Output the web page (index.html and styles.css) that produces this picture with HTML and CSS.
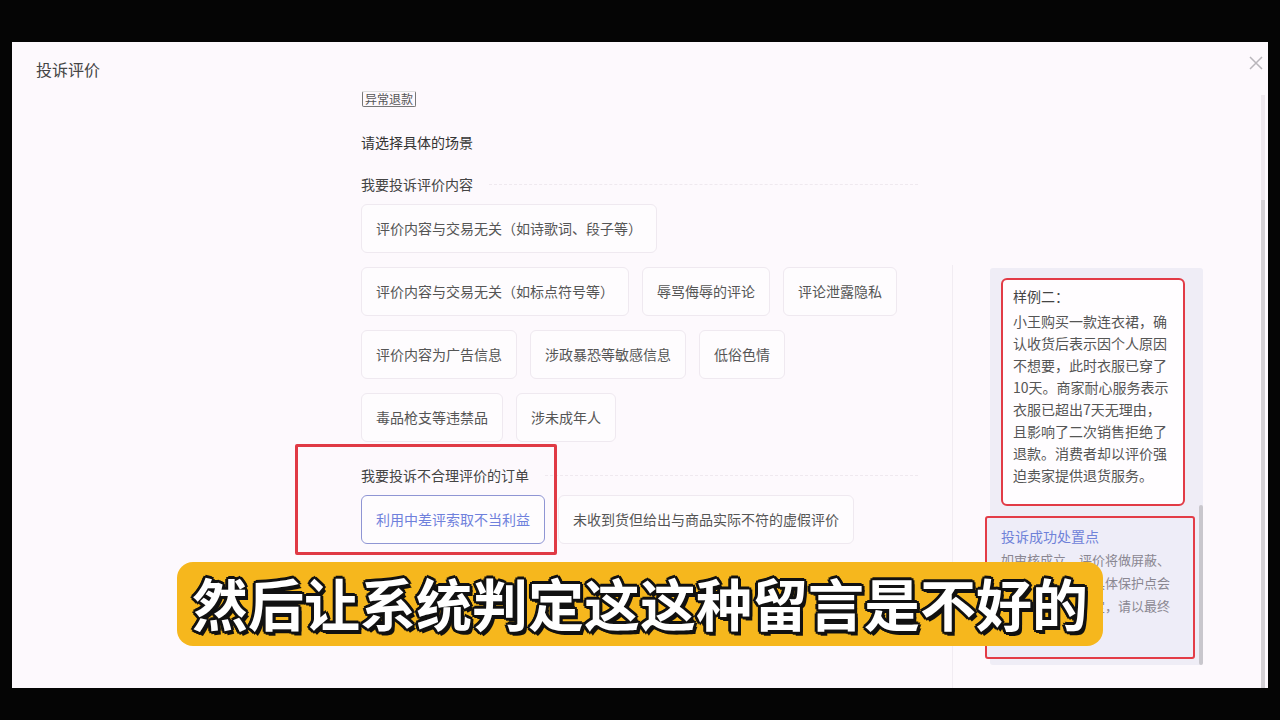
FILE: index.html
```html
<!DOCTYPE html>
<html lang="zh-CN">
<head>
  <meta charset="UTF-8">
  <title>投诉评价</title>
  <link rel="stylesheet" href="styles.css">
</head>
<body>

  <div class="modal">
    <div class="modal-head">
      <h1 class="modal-title">投诉评价</h1>
      <svg class="close" width="14" height="14" viewBox="0 0 14 14">
        <path d="M1 1L13 13M13 1L1 13" stroke="#b9b6bb" stroke-width="1.5" fill="none"/>
      </svg>
    </div>

    <div class="modal-body">
      <div class="main">
        <span class="tag">异常退款</span>

        <p class="hint">请选择具体的场景</p>

        <div class="section-label">我要投诉评价内容</div>
        <div class="opts">
          <div class="opt">评价内容与交易无关（如诗歌词、段子等）</div>
          <div class="opt">评价内容与交易无关（如标点符号等）</div>
          <div class="opt">辱骂侮辱的评论</div>
          <div class="opt">评论泄露隐私</div>
          <div class="opt">评价内容为广告信息</div>
          <div class="opt">涉政暴恐等敏感信息</div>
          <div class="opt">低俗色情</div>
          <div class="opt">毒品枪支等违禁品</div>
          <div class="opt">涉未成年人</div>
        </div>

        <div class="section-label second">我要投诉不合理评价的订单</div>
        <div class="opts">
          <div class="opt active">利用中差评索取不当利益</div>
          <div class="opt">未收到货但给出与商品实际不符的虚假评价</div>
        </div>
      </div>

      <div class="side">
        <div class="side-panel">
          <div class="sample">
            <div class="sample-title">样例二：</div>
            <p class="sample-text">小王购买一款连衣裙，确<br>认收货后表示因个人原因<br>不想要，此时衣服已穿了<br>10天。商家耐心服务表示<br>衣服已超出7天无理由，<br>且影响了二次销售拒绝了<br>退款。消费者却以评价强<br>迫卖家提供退货服务。</p>
          </div>

          <div class="tips">
            <div class="tips-title">投诉成功处置点</div>
            <p class="tips-text">如审核成立，评价将做屏蔽、<br>删除处理，其他具体保护点会<br>根据实际情况判定，请以最终<br>处理结果为准。</p>
          </div>

          <div class="panel-scroll"></div>
        </div>
      </div>
    </div>

    <!-- marker drawn around the chosen option -->
    <div class="mark"></div>

    <div class="scroll-track"><div class="scroll-thumb"></div></div>
  </div>

  <div class="caption">然后让系统判定这这种留言是不好的</div>

</body>
</html>
```

FILE: styles.css
```css
body {
  margin: 0;
  width: 1280px;
  height: 720px;
  overflow: hidden;
  background: #050505;
  font-family: "Noto Sans CJK SC", "Noto Sans", sans-serif;
  position: relative;
}

.modal {
  margin: 42px 12px 0;
  height: 646px;
  background: #fdf9fd;
  display: flex;
  flex-direction: column;
  position: relative;
}

.modal-head {
  height: 49px;
  display: flex;
  justify-content: space-between;
  align-items: flex-start;
  padding: 0 5px 0 24px;
  box-sizing: border-box;
}
.modal-title {
  margin: 17px 0 0;
  font-size: 16px;
  line-height: 20px;
  font-weight: 400;
  color: #444;
}
.close {
  margin-top: 14px;
}

.modal-body {
  flex: 1;
  min-height: 0;
  display: flex;
  overflow: hidden;
}

.main {
  margin-left: 349px;
  width: 557px;
  flex-shrink: 0;
}

.tag {
  display: block;
  width: fit-content;
  font-size: 12px;
  line-height: 14px;
  padding: 0 2px;
  margin-left: 1px;
  color: #555;
  border: 1px solid #777;
  border-top-color: #ddd;
  border-radius: 2px;
}

.hint {
  margin: 25px 0 0;
  font-size: 14px;
  line-height: 20px;
  color: #333;
}

.section-label {
  display: flex;
  align-items: center;
  margin-top: 22px;
  margin-bottom: 10px;
  font-size: 14px;
  line-height: 20px;
  color: #444;
}
.section-label::after {
  content: "";
  flex: 1;
  margin-left: 16px;
  border-top: 1px dashed #efe9ef;
}
.section-label.second {
  margin-top: 23px;
}

.opts {
  display: flex;
  flex-wrap: wrap;
  gap: 14px 13px;
}
.opt {
  height: 49px;
  box-sizing: border-box;
  padding: 0 14px;
  border: 1px solid #efe9f0;
  border-radius: 6px;
  background: #fefcfe;
  font-size: 14px;
  line-height: 47px;
  color: #555;
  white-space: nowrap;
}
.opt.active {
  border-color: #8f95d4;
  color: #6f80dc;
}

.side {
  margin: 174px 0 0 34px;
  padding-left: 37px;
  border-left: 1px solid #f1ecf2;
}
.side-panel {
  position: relative;
  width: 213px;
  height: 397px;
  margin-top: 3px;
  padding: 12px 0 0 13px;
  box-sizing: border-box;
  background: #efedf6;
  border-radius: 3px;
}

.sample {
  width: 180px;
  box-sizing: border-box;
  padding: 5px 0 18px 10px;
  background: #fffdff;
  border-radius: 4px;
  outline: 2.5px solid #e23b46;
  color: #555;
  font-size: 14px;
  line-height: 22px;
}
.sample-title {
  color: #444;
}
.sample-text {
  margin: 3px 0 0;
  white-space: nowrap;
}

.tips {
  width: 210px;
  height: 143px;
  box-sizing: border-box;
  margin: 12px 0 0 -18px;
  padding: 6px 0 0 14px;
  border: 2.5px solid #e33c47;
  border-radius: 3px;
  background: #eeedf8;
}
.tips-title {
  font-size: 14px;
  line-height: 24px;
  color: #6f82d8;
}
.tips-text {
  margin: 0;
  font-size: 13px;
  line-height: 23px;
  color: #8a8791;
  white-space: nowrap;
}

.panel-scroll {
  position: absolute;
  right: 0;
  top: 237px;
  width: 4px;
  height: 160px;
  border-radius: 2px;
  background: #c9c7cd;
}

.mark {
  position: absolute;
  left: 283px;
  top: 402px;
  width: 262px;
  height: 111px;
  box-sizing: border-box;
  border: 3px solid #e03a45;
  border-radius: 2px;
}

.scroll-track {
  position: absolute;
  right: 3px;
  top: 53px;
  bottom: 0;
  width: 4px;
  background: #efe9ef;
}
.scroll-thumb {
  margin-top: 105px;
  height: calc(100% - 105px);
  background: #d3cfd4;
}

.caption {
  position: absolute;
  left: 177px;
  top: 562px;
  width: 926px;
  height: 84px;
  border-radius: 16px;
  background: #f6b71d;
  color: #fff;
  font-size: 56px;
  font-weight: 700;
  line-height: 80px;
  text-align: center;
  white-space: nowrap;
  text-shadow:
    -3px 0 0 #111, 3px 0 0 #111, 0 -3px 0 #111, 0 3px 0 #111,
    -2px -2px 0 #111, 2px -2px 0 #111, -2px 2px 0 #111, 2px 2px 0 #111,
    3px 4px 0 #111;
}
```
